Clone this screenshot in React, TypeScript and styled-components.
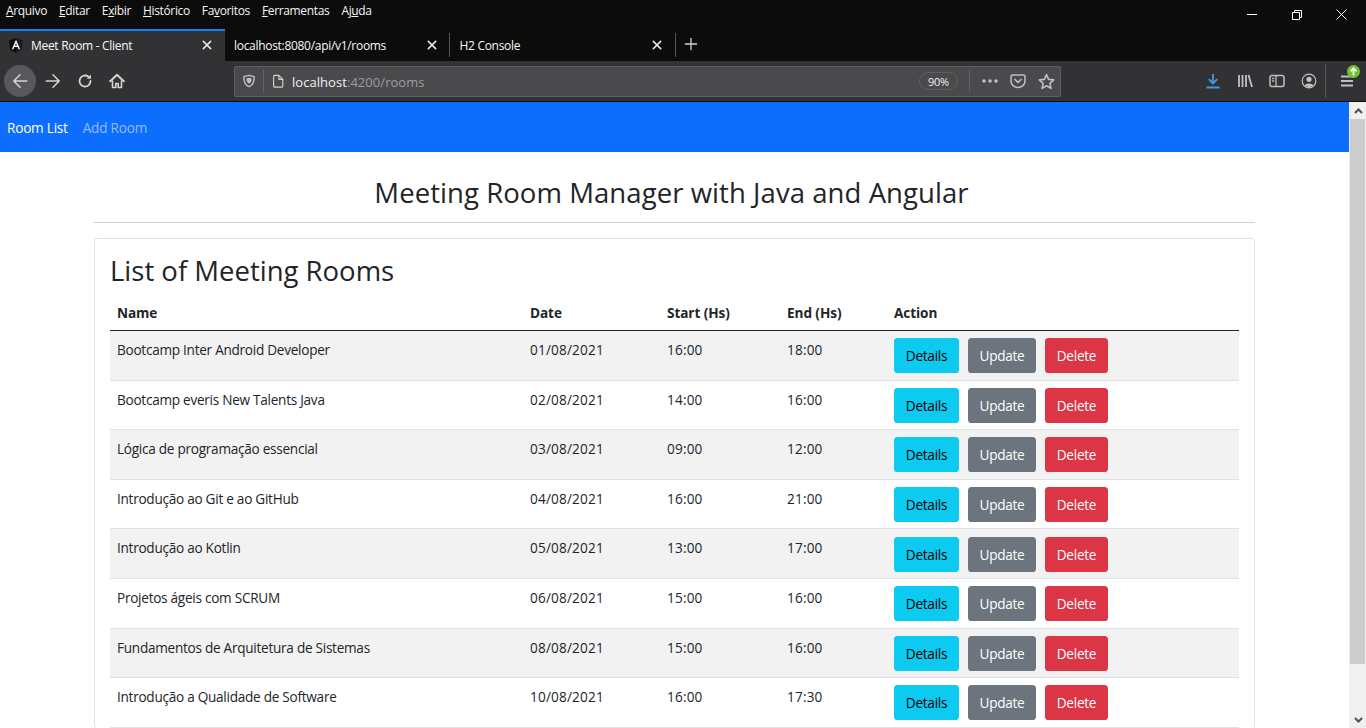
import React from 'react';
import styled, { createGlobalStyle } from 'styled-components';

const UI_FONT = `'Open Sans', 'Noto Sans', 'Liberation Sans', sans-serif`;

const GlobalStyle = createGlobalStyle`
  html, body {
    margin: 0;
    padding: 0;
    height: 728px;
    overflow: hidden;
    background: #fff;
  }
  * {
    box-sizing: border-box;
  }
`;

const Shell = styled.div`
  display: flex;
  flex-direction: column;
  width: 1366px;
  height: 728px;
  overflow: hidden;
  font-family: ${UI_FONT};
`;

const MenuBar = styled.div`
  display: flex;
  justify-content: space-between;
  height: 29px;
  padding-left: 6px;
  background: #0c0c0c;
  color: #f4f4f4;
  font-size: 12px;
  letter-spacing: -0.35px;
`;

const MenuItems = styled.div`
  display: flex;
  gap: 12px;
  padding-top: 3px;
  line-height: 16px;
`;

const WindowButtons = styled.div`
  display: flex;
  align-items: center;
  padding-right: 2px;
`;

const WindowButton = styled.span`
  display: flex;
  justify-content: center;
  align-items: center;
  width: 45px;
  height: 29px;
`;

const TabStrip = styled.div`
  display: flex;
  align-items: stretch;
  height: 32px;
  background: #0c0c0c;
`;

const Tab = styled.div<{ $active?: boolean }>`
  display: flex;
  align-items: center;
  width: 224.5px;
  padding: 0 11.5px 2px ${({ $active }) => ($active ? 9 : 9.5)}px;
  background: ${({ $active }) => ($active ? '#323234' : 'transparent')};
  border-top: 2px solid ${({ $active }) => ($active ? '#0a84ff' : 'transparent')};
  color: #f9f9fa;
  font-size: 12px;
  letter-spacing: -0.3px;
`;

const TabTitle = styled.span`
  flex: 1;
  white-space: nowrap;
`;

const TabDivider = styled.span`
  align-self: center;
  width: 1px;
  height: 24px;
  background: #56565a;
`;

const NewTab = styled.span`
  display: flex;
  align-items: center;
  padding: 0 0 2px 8px;
`;

const Toolbar = styled.div`
  display: flex;
  align-items: center;
  height: 41px;
  padding-left: 4px;
  background: #323234;
  border-bottom: 1px solid #0c0c0c;
`;

const NavCircle = styled.span`
  display: flex;
  justify-content: center;
  align-items: center;
  width: 32px;
  height: 32px;
  margin-right: 1px;
  border-radius: 50%;
  background: #58585c;
`;

const ToolButton = styled.span<{ $width?: number }>`
  display: flex;
  justify-content: center;
  align-items: center;
  width: ${({ $width }) => $width ?? 32}px;
  height: 32px;
  flex: none;
`;

const MenuButton = styled(ToolButton)`
  position: relative;
`;

const UrlBar = styled.div`
  display: flex;
  align-items: center;
  flex: none;
  width: 827px;
  height: 31px;
  margin: 0 136px 0 101px;
  padding-left: 5px;
  background: #4a4a4d;
  border: 1px solid #5f5f62;
  border-radius: 2px;
`;

const UrlDivider = styled.span`
  flex: none;
  width: 1px;
  height: 22px;
  background: #646467;
`;

const SecurityDivider = styled(UrlDivider)`
  margin: 0 7px 0 5px;
`;

const PageActions = styled.div`
  display: flex;
  flex: none;
  margin-left: 6px;
`;

const UrlText = styled.div`
  flex: 1;
  margin-left: 7px;
  padding-top: 1px;
  color: #9d9da0;
  font-size: 13px;
  letter-spacing: 0.05px;
  white-space: nowrap;
`;

const UrlHost = styled.span`
  color: #f0f0f1;
`;

const ZoomPill = styled.span`
  flex: none;
  width: 39px;
  height: 18px;
  margin-right: 11px;
  border: 1px solid #5f5f62;
  border-radius: 9px;
  color: #f0f0f1;
  font-size: 11px;
  letter-spacing: -0.3px;
  line-height: 17px;
  text-align: center;
`;

const ToolDivider = styled.span`
  flex: none;
  width: 1px;
  height: 34px;
  margin-right: 5px;
  background: #56565a;
`;

const Badge = styled.span`
  position: absolute;
  top: 0;
  right: 3px;
  display: flex;
  width: 13px;
  height: 13px;
`;

const Viewport = styled.div`
  display: flex;
  flex: 1;
  min-height: 0;
`;

const Page = styled.div`
  flex: 1;
  min-width: 0;
  overflow: hidden;
  background: #fff;
  color: #212529;
  font-size: 13.6px;
  letter-spacing: -0.27px;
  line-height: 21.6px;
`;

const Navbar = styled.nav`
  display: flex;
  align-items: center;
  gap: 15px;
  height: 50px;
  padding: 1px 0 0 7px;
  background: #0d6efd;
  letter-spacing: -0.22px;
`;

const NavLink = styled.span<{ $active?: boolean }>`
  color: ${({ $active }) => ($active ? '#fff' : 'rgba(255, 255, 255, 0.55)')};
`;

const Container = styled.main`
  width: 1161px;
  margin: 0 auto;
  padding-top: 24px;
`;

const PageTitle = styled.h2`
  margin: 0;
  padding: 0 6px 11px 0;
  border-bottom: 1px solid #cfcfcf;
  font-size: 27.5px;
  font-weight: 400;
  letter-spacing: 0.07px;
  line-height: 34.6px;
  text-align: center;
`;

const Card = styled.section`
  margin-top: 15px;
  padding: 15px 15px 0;
  border: 1px solid #dfdfdf;
  border-radius: 3.6px;
`;

const CardTitle = styled.h2`
  margin: 0 0 7px;
  font-size: 27.5px;
  font-weight: 400;
  letter-spacing: 0;
  line-height: 34.6px;
`;

const Row = styled.div<{ $header?: boolean; $striped?: boolean }>`
  display: grid;
  grid-template-columns: 413px 137px 120px 107px 352px;
  height: ${({ $header }) => ($header ? '35.89px' : '49.6px')};
  background: ${({ $striped }) => ($striped ? '#f2f2f2' : 'transparent')};
  border-bottom: 1px solid ${({ $header }) => ($header ? '#212529' : '#dee2e6')};
  font-weight: ${({ $header }) => ($header ? 700 : 400)};
  letter-spacing: ${({ $header }) => ($header ? '-0.08px' : 'inherit')};
`;

const Cell = styled.div<{ $numeric?: boolean; $heading?: boolean }>`
  padding: ${({ $heading }) => ($heading ? '7.2px' : '8px')} 7px 0;
  letter-spacing: ${({ $numeric }) => ($numeric ? '0.17px' : 'inherit')};
  white-space: nowrap;
`;

const ActionCell = styled.div`
  display: flex;
  gap: 9px;
  padding: 7.2px 7px 0;
`;

const Button = styled.button<{ $kind: 'info' | 'secondary' | 'danger'; $width: number }>`
  width: ${({ $width }) => $width}px;
  height: 35px;
  padding: 0;
  border: none;
  border-radius: 3.6px;
  background: ${({ $kind }) =>
    $kind === 'info' ? '#0dcaf0' : $kind === 'secondary' ? '#6c757d' : '#dc3545'};
  color: ${({ $kind }) => ($kind === 'info' ? '#000' : '#fff')};
  font-family: inherit;
  font-size: 13.6px;
  letter-spacing: -0.27px;
`;

const Scrollbar = styled.div`
  display: flex;
  flex-direction: column;
  flex: none;
  width: 17px;
  padding-left: 1px;
  background: #f0f0f0;
`;

const ScrollArrow = styled.span`
  display: flex;
  justify-content: center;
  align-items: center;
  flex: none;
  height: 17px;
`;

const ScrollTrack = styled.div`
  flex: 1;
`;

const ScrollThumb = styled.div`
  width: 15px;
  height: 545px;
  background: #cdcdcd;
`;

type Room = {
  name: string;
  date: string;
  start: string;
  end: string;
};

const rooms: Room[] = [
  { name: 'Bootcamp Inter Android Developer', date: '01/08/2021', start: '16:00', end: '18:00' },
  { name: 'Bootcamp everis New Talents Java', date: '02/08/2021', start: '14:00', end: '16:00' },
  { name: 'Lógica de programação essencial', date: '03/08/2021', start: '09:00', end: '12:00' },
  { name: 'Introdução ao Git e ao GitHub', date: '04/08/2021', start: '16:00', end: '21:00' },
  { name: 'Introdução ao Kotlin', date: '05/08/2021', start: '13:00', end: '17:00' },
  { name: 'Projetos ágeis com SCRUM', date: '06/08/2021', start: '15:00', end: '16:00' },
  { name: 'Fundamentos de Arquitetura de Sistemas', date: '08/08/2021', start: '15:00', end: '16:00' },
  { name: 'Introdução a Qualidade de Software', date: '10/08/2021', start: '16:00', end: '17:30' },
];

const tabs = [
  { title: 'Meet Room - Client', active: true },
  { title: 'localhost:8080/api/v1/rooms' },
  { title: 'H2 Console' },
];

const Icon: React.FC<{ size?: number; color?: string; children: React.ReactNode }> = ({
  size = 16,
  color = '#d4d4d5',
  children,
}) => (
  <svg
    width={size}
    height={size}
    viewBox="0 0 16 16"
    fill="none"
    stroke={color}
    strokeWidth="1.6"
    strokeLinecap="round"
    strokeLinejoin="round"
  >
    {children}
  </svg>
);

const LogoSlot = styled.span`
  display: flex;
  flex: none;
  margin-right: 8px;
`;

const AngularLogo = () => (
  <LogoSlot>
    <svg width="14" height="15" viewBox="0 0 14 15">
      <path d="M7 0 0 2.500l1.100 9.200L7 15z" fill="#0c0c0e" />
      <path d="M7 0l7 2.500-1.100 9.200L7 15z" fill="#1b1b1e" />
      <path d="M7 1.700 2.800 11.200h1.600l.9-2.200h3.400l.9 2.200h1.600zM6 7.600l1-2.500 1 2.500z" fill="#fff" />
    </svg>
  </LogoSlot>
);

const CloseIcon = () => (
  <Icon size={12} color="#e8e8e8">
    <path d="M2.5 2.5l11 11M13.5 2.5l-11 11" strokeWidth="2" strokeLinecap="butt" />
  </Icon>
);

const App: React.FC = () => {
  const menu: [string, string, string][] = [
    ['', 'A', 'rquivo'],
    ['', 'E', 'ditar'],
    ['E', 'x', 'ibir'],
    ['', 'H', 'istórico'],
    ['Fa', 'v', 'oritos'],
    ['', 'F', 'erramentas'],
    ['Aj', 'u', 'da'],
  ];

  return (
    <Shell>
      <GlobalStyle />
      <MenuBar>
        <MenuItems>
          {menu.map(([before, key, after]) => (
            <span key={before + key + after}>
              {before}
              <u>{key}</u>
              {after}
            </span>
          ))}
        </MenuItems>
        <WindowButtons>
          <WindowButton>
            <svg width="10" height="10" viewBox="0 0 10 10" stroke="#fff" fill="none">
              <path d="M0 4.5h10" />
            </svg>
          </WindowButton>
          <WindowButton>
            <svg width="10" height="10" viewBox="0 0 10 10" stroke="#fff" fill="none">
              <path d="M.5 2.5h7v7h-7zM2.5 2.5v-2h7v7h-2" />
            </svg>
          </WindowButton>
          <WindowButton>
            <svg width="11" height="11" viewBox="0 0 11 11" stroke="#fff" fill="none">
              <path d="M.5.5l10 10M10.5.5l-10 10" />
            </svg>
          </WindowButton>
        </WindowButtons>
      </MenuBar>

      <TabStrip>
        {tabs.map((tab, index) => (
          <React.Fragment key={tab.title}>
            {index === 2 && <TabDivider />}
            <Tab $active={tab.active}>
              {tab.active && <AngularLogo />}
              <TabTitle>{tab.title}</TabTitle>
              <CloseIcon />
            </Tab>
          </React.Fragment>
        ))}
        <TabDivider />
        <NewTab>
          <Icon size={14} color="#cfcfcf">
            <path d="M8 1v14M1 8h14" strokeWidth="1.5" strokeLinecap="butt" />
          </Icon>
        </NewTab>
      </TabStrip>

      <Toolbar>
        <NavCircle>
          <Icon size={18}>
            <path d="M14 8H2.500M8 2.500 2.500 8 8 13.500" strokeWidth="1.400" />
          </Icon>
        </NavCircle>
        <ToolButton>
          <Icon size={18}>
            <path d="M2 8h11.500M8 2.500 13.500 8 8 13.500" strokeWidth="1.400" />
          </Icon>
        </ToolButton>
        <ToolButton>
          <Icon>
            <path d="M13.500 8A5.500 5.500 0 1 1 11.500 3.800" strokeWidth="1.800" />
            <path d="M14 1.500v4.200H9.800z" fill="#d4d4d5" stroke="none" />
          </Icon>
        </ToolButton>
        <ToolButton>
          <Icon>
            <path d="M1.200 8.200 8 1.800l6.800 6.400" strokeWidth="2" />
            <path d="M3.500 8v6.500h3.300V10.500h2.400v4h3.300V8" strokeWidth="1.600" />
          </Icon>
        </ToolButton>

        <UrlBar>
          <ToolButton $width={18}>
            <Icon size={14} color="#c0c0c2">
              <path d="M2 3 8 1.500 14 3c0 6-1.500 9.500-6 11.500C3.500 12.500 2 9 2 3z" />
              <path d="M5 5 8 4.300 11 5c0 3-.8 4.800-3 6-2.200-1.200-3-3-3-6z" fill="#c0c0c2" stroke="none" />
            </Icon>
          </ToolButton>
          <SecurityDivider />
          <ToolButton $width={14}>
            <Icon size={15} color="#d4d4d5">
              <path d="M3 2.500A1.500 1.500 0 0 1 4.500 1H9l4.500 4.500V13a1.500 1.500 0 0 1-1.500 1.500H4.500A1.500 1.500 0 0 1 3 13zM9 1v4.500h4.500" strokeWidth="1.300" />
            </Icon>
          </ToolButton>
          <UrlText>
            <UrlHost>localhost</UrlHost>:4200/rooms
          </UrlText>
          <ZoomPill>90%</ZoomPill>
          <UrlDivider />
          <PageActions>
            <ToolButton $width={28}>
              <svg width="16" height="4" viewBox="0 0 16 4" fill="#c0c0c2">
                <circle cx="2" cy="2" r="1.800" />
                <circle cx="8" cy="2" r="1.800" />
                <circle cx="14" cy="2" r="1.800" />
              </svg>
            </ToolButton>
            <ToolButton $width={28}>
              <Icon color="#c0c0c2">
                <path d="M1 3.500A1.500 1.500 0 0 1 2.500 2h11A1.500 1.500 0 0 1 15 3.500V8a7 6.500 0 0 1-14 0z" strokeWidth="1.500" />
                <path d="M5 6.500 8 9.500l3-3" strokeWidth="1.700" />
              </Icon>
            </ToolButton>
            <ToolButton $width={28}>
              <Icon size={17} color="#c0c0c2">
                <path d="M8 1.500 10 6l4.800.5-3.600 3.200 1 4.800L8 12l-4.200 2.500 1-4.800L1.200 6.500 6 6z" strokeWidth="1.500" />
              </Icon>
            </ToolButton>
          </PageActions>
        </UrlBar>

        <ToolButton>
          <Icon color="#3f9be8">
            <path d="M8 1v9M3.800 6.200 8 10.500l4.200-4.300M1.500 14.500h13" strokeWidth="1.800" strokeLinecap="butt" />
          </Icon>
        </ToolButton>
        <ToolButton>
          <Icon color="#c0c0c2">
            <path d="M2 2v12M5.500 2v12M9 2v12M11.500 2l3.500 12" strokeWidth="1.800" strokeLinecap="butt" />
          </Icon>
        </ToolButton>
        <ToolButton>
          <Icon color="#c0c0c2">
            <rect x="1" y="2.500" width="14" height="11" rx="2" strokeWidth="1.500" />
            <path d="M7 2.500v11M3.200 5.500h2M3.200 8h2" strokeWidth="1.300" strokeLinecap="butt" />
          </Icon>
        </ToolButton>
        <ToolButton>
          <Icon color="#c0c0c2">
            <circle cx="8" cy="8" r="6.800" strokeWidth="1.200" />
            <circle cx="8" cy="6.300" r="2.600" fill="#c0c0c2" stroke="none" />
            <path d="M3.500 12.500C4.500 9.800 11.500 9.800 12.500 12.500L8 14.500z" fill="#c0c0c2" stroke="none" />
          </Icon>
        </ToolButton>
        <ToolDivider />
        <MenuButton>
          <Icon color="#c0c0c2">
            <path d="M2 3.500h12M2 8h12M2 12.500h12" strokeWidth="1.800" strokeLinecap="butt" />
          </Icon>
          <Badge>
            <svg width="13" height="13" viewBox="0 0 13 13">
              <circle cx="6.500" cy="6.500" r="6.500" fill="#6dc62b" />
              <path d="M6.500 10.500v-7M3.500 6.300l3-3 3 3" stroke="#fff" strokeWidth="1.800" fill="none" />
            </svg>
          </Badge>
        </MenuButton>
      </Toolbar>

      <Viewport>
        <Page>
          <Navbar>
            <NavLink $active>Room List</NavLink>
            <NavLink>Add Room</NavLink>
          </Navbar>
          <Container>
            <PageTitle>Meeting Room Manager with Java and Angular</PageTitle>
            <Card>
              <CardTitle>List of Meeting Rooms</CardTitle>
              <Row $header>
                <Cell $heading>Name</Cell>
                <Cell $heading>Date</Cell>
                <Cell $heading>Start (Hs)</Cell>
                <Cell $heading>End (Hs)</Cell>
                <Cell $heading>Action</Cell>
              </Row>
              {rooms.map((room, index) => (
                <Row key={room.date} $striped={index % 2 === 0}>
                  <Cell>{room.name}</Cell>
                  <Cell $numeric>{room.date}</Cell>
                  <Cell $numeric>{room.start}</Cell>
                  <Cell $numeric>{room.end}</Cell>
                  <ActionCell>
                    <Button $kind="info" $width={65}>Details</Button>
                    <Button $kind="secondary" $width={68}>Update</Button>
                    <Button $kind="danger" $width={63}>Delete</Button>
                  </ActionCell>
                </Row>
              ))}
            </Card>
          </Container>
        </Page>
        <Scrollbar>
          <ScrollArrow>
            <svg width="9" height="6" viewBox="0 0 9 6" fill="none" stroke="#505050" strokeWidth="2">
              <path d="M1 5l3.500-3.500L8 5" />
            </svg>
          </ScrollArrow>
          <ScrollThumb />
          <ScrollTrack />
          <ScrollArrow>
            <svg width="9" height="6" viewBox="0 0 9 6" fill="none" stroke="#505050" strokeWidth="2">
              <path d="M1 1l3.500 3.500L8 1" />
            </svg>
          </ScrollArrow>
        </Scrollbar>
      </Viewport>
    </Shell>
  );
};

export default App;
